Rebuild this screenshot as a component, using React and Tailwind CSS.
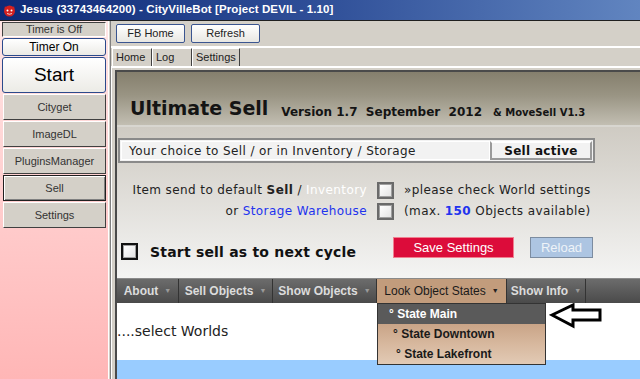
import React from "react";

const tahoma = { fontFamily: '"Liberation Sans", Arial, sans-serif' };

function SideButton({ label, pressed }) {
  return (
    <div
      className={
        "flex h-[26px] items-center justify-center bg-[#d4d0c8] text-[11px] text-[#333] " +
        (pressed
          ? "border border-[#202020] shadow-[inset_1px_1px_0_#fff,inset_-1px_-1px_0_#808080]"
          : "border border-t-white border-l-white border-r-[#404040] border-b-[#404040]")
      }
    >
      {label}
    </div>
  );
}

function CheckBox({ dark }) {
  return (
    <div
      className={
        "flex h-[17px] w-[17px] shrink-0 items-center justify-center " +
        (dark ? "border-2 border-[#111]" : "border-2 border-[#6a6a6a]")
      }
    >
      <div className="h-full w-full border border-[#a0a0a0] bg-[linear-gradient(135deg,#ffffff,#e4e4e4)]" />
    </div>
  );
}

function MenuItem({ label, active, width, children }) {
  return (
    <div
      className={
        "relative flex h-full shrink-0 items-center justify-center gap-[6px] whitespace-nowrap border-r border-[#333] text-[12px] " +
        (active ? "bg-[#c29c7c] text-[#1a1a1a]" : "font-bold text-[#dcdcdc]") +
        " " +
        width
      }
    >
      <span>{label}</span>
      <span className={"text-[7px] " + (active ? "text-[#222]" : "text-[#9a9a9a]")}>▼</span>
      {children}
    </div>
  );
}

export default function App() {
  return (
    <div className="flex h-[379px] w-[640px] flex-col overflow-hidden bg-[#d4d0c8]" style={tahoma}>
      {/* title bar */}
      <div className="flex h-[20px] shrink-0 items-center gap-[4px] bg-[linear-gradient(to_right,#0e2a78,#2f4f98_50%,#6185c0)] pl-[3px]">
        <svg width="13" height="13" viewBox="0 0 13 13">
          <circle cx="6.5" cy="7" r="5.5" fill="#d42020" />
          <path d="M2 2 L4 5 L1.5 4.5Z M11 2 L9 5 L11.5 4.5Z" fill="#d42020" />
          <circle cx="4.5" cy="6.5" r="1" fill="#fff" />
          <circle cx="8.5" cy="6.5" r="1" fill="#fff" />
          <path d="M4 9.5 Q6.5 11 9 9.5" stroke="#fff" strokeWidth="0.8" fill="none" />
        </svg>
        <span className="text-[11.5px] font-bold tracking-[0.1px] text-white">
          Jesus (33743464200) - CityVilleBot [Project DEVIL - 1.10]
        </span>
      </div>

      <div className="flex flex-1 border-t border-[#202020]">
        {/* left panel */}
        <div className="flex w-[108px] shrink-0 flex-col gap-[1px] bg-[linear-gradient(#ffe6e6,#ffb6b6)] px-[2px] pt-[1px]">
          <div className="flex h-[15px] items-center justify-center border border-t-[#404040] border-l-[#404040] border-r-white border-b-white bg-[#d4d0c8] text-[11px] text-[#333]">
            Timer is Off
          </div>
          <div className="flex h-[18px] items-center justify-center rounded-[3px] border border-[#2b4a8c] bg-[linear-gradient(#ffffff,#ecebe6)] text-[12px] text-black">
            Timer On
          </div>
          <div className="flex h-[36px] items-center justify-center rounded-[3px] border border-[#2b4a8c] bg-[linear-gradient(#ffffff,#ecebe6)] text-[19px] text-black">
            Start
          </div>
          <div className="flex flex-col gap-[1px] pl-[1px]">
            <SideButton label="Cityget" />
            <SideButton label="ImageDL" />
            <SideButton label="PluginsManager" />
            <SideButton label="Sell" pressed />
            <SideButton label="Settings" />
          </div>
        </div>

        {/* separator */}
        <div className="w-[3px] shrink-0 border-l border-r border-l-white border-r-[#808080] bg-[#d4d0c8]" />

        {/* right panel */}
        <div className="flex min-w-0 flex-1 flex-col">
          {/* toolbar */}
          <div className="flex h-[27px] shrink-0 items-center gap-[6px] border-b-2 border-white pl-[5px]">
            <div className="flex h-[19px] w-[69px] items-center justify-center rounded-[2px] border border-[#3a5590] bg-[linear-gradient(#ffffff,#e8e7e2)] text-[11px] text-[#222]">
              FB Home
            </div>
            <div className="flex h-[19px] w-[69px] items-center justify-center rounded-[2px] border border-[#3a5590] bg-[linear-gradient(#ffffff,#e8e7e2)] text-[11px] text-[#222]">
              Refresh
            </div>
          </div>

          {/* tabs */}
          <div className="flex h-[20px] shrink-0 items-end border-b-2 border-white pl-[1px]">
            <div className="flex h-[18px] w-[40px] items-center border border-b-0 border-t-white border-l-white border-r-[#404040] pl-[3px] text-[11px] text-[#222]">
              Home
            </div>
            <div className="flex h-[18px] w-[40px] items-center border border-b-0 border-t-white border-l-white border-r-[#404040] pl-[3px] text-[11px] text-[#222]">
              Log
            </div>
            <div className="flex h-[18px] w-[48px] items-center border border-b-0 border-t-white border-l-white border-r-[#404040] pl-[3px] text-[11px] text-[#222]">
              Settings
            </div>
          </div>

          {/* content */}
          <div className="flex flex-1 border-l border-white pl-[3px] pt-[2px]">
            <div
              className="flex flex-1 flex-col border-l-2 border-t-2 border-[#4a4a4a]"
              style={{ fontFamily: '"DejaVu Sans", Verdana, sans-serif' }}
            >
              {/* header */}
              <div className="flex h-[55px] shrink-0 items-end gap-[13px] border-b-2 border-[#d8d6d0] bg-[linear-gradient(#857f6d,#9a9584_45%,#c2beb2)] pb-[7px] pl-[13px]">
                <span className="text-[19px] font-bold leading-none text-[#141414]">Ultimate Sell</span>
                <span className="text-[12px] font-bold leading-none text-[#141414]">
                  Version 1.7&nbsp; September&nbsp; 2012
                </span>
                <span className="-ml-[2px] text-[10px] font-bold leading-none text-[#141414]">
                  &amp; MoveSell V1.3
                </span>
              </div>

              {/* body */}
              <div className="flex h-[151px] shrink-0 flex-col bg-[linear-gradient(#cfcbc3,#f4f4f3)] pt-[11px]">
                <div className="ml-[1px] flex h-[25px] w-[477px] border-2 border-[#8a8a8a] bg-[#f2f2f2] p-[1px]">
                  <div className="flex flex-1 items-center border border-white pl-[7px] text-[12px] tracking-[0.4px] text-[#222]">
                    Your choice to Sell / or in Inventory / Storage
                  </div>
                  <div className="flex w-[102px] items-center justify-center border-2 border-t-white border-l-[#9a9a9a] border-r-[#9a9a9a] border-b-[#9a9a9a] text-[12px] font-bold tracking-[0.3px] text-[#111]">
                    Sell active
                  </div>
                </div>

                <div className="mt-[18px] flex items-center text-[12px] tracking-[0.4px] text-[#222]">
                  <div className="w-[250px] text-right">
                    Item send to default <b>Sell</b> / <span className="text-white">Inventory</span>
                  </div>
                  <div className="ml-[10px]">
                    <CheckBox />
                  </div>
                  <div className="ml-[10px] whitespace-nowrap">»please check World settings</div>
                </div>
                <div className="mt-[3px] flex items-center text-[12px] tracking-[0.4px] text-[#222]">
                  <div className="w-[250px] text-right">
                    or <span className="text-[#2233ee]">Storage Warehouse</span>
                  </div>
                  <div className="ml-[10px]">
                    <CheckBox />
                  </div>
                  <div className="ml-[10px] whitespace-nowrap">
                    (max. <b className="text-[#2233ee]">150</b> Objects available)
                  </div>
                </div>

                <div className="mt-[17px] flex items-start">
                  <div className="ml-[4px] mt-[6px] w-[17px]">
                    <CheckBox dark />
                  </div>
                  <div className="ml-[12px] mt-[6px] w-[243px] text-[14px] font-bold leading-[18px] tracking-[0.2px] text-[#111]">
                    Start sell as to next cycle
                  </div>
                  <div
                    className="flex h-[21px] w-[121px] items-center justify-center border border-[#f08090] bg-[#dc0c3a] text-[13px] text-white"
                    style={tahoma}
                  >
                    Save Settings
                  </div>
                  <div
                    className="ml-[16px] flex h-[21px] w-[63px] items-center justify-center border border-[#7c8ca0] bg-[#adc5e2] text-[13px] text-[#eef3f8]"
                    style={tahoma}
                  >
                    Reload
                  </div>
                </div>
              </div>

              {/* menu bar */}
              <div
                className="relative flex h-[25px] shrink-0 border-t border-[#8a8a8a] bg-[linear-gradient(#6c6c6c,#4a4a4a)]"
                style={tahoma}
              >
                <MenuItem label="About" width="w-[62px]" />
                <MenuItem label="Sell Objects" width="w-[94px]" />
                <MenuItem label="Show Objects" width="w-[104px]" />
                <MenuItem label="Look Object States" width="w-[130px]" active>
                  <div className="absolute left-0 top-[24px] z-10 w-[169px] border border-[#333] text-[12px] font-bold">
                    <div className="flex h-[20px] items-center bg-[#5a5a5a] pl-[11px] text-white">° State Main</div>
                    <div className="flex h-[20px] items-center bg-[linear-gradient(#c9a487,#d7b89e)] pl-[15px] text-[#1a1a1a]">
                      ° State Downtown
                    </div>
                    <div className="flex h-[20px] items-center bg-[linear-gradient(#d7b89e,#e2cab5)] pl-[18px] text-[#1a1a1a]">
                      ° State Lakefront
                    </div>
                  </div>
                </MenuItem>
                <MenuItem label="Show Info" width="w-[79px]" />
                <svg className="absolute left-[432px] top-[24px] z-20" width="56" height="26" viewBox="0 0 56 26">
                  <path
                    d="M3 12 L24 2 L24 7 L51 7 L51 17 L24 17 L24 23 Z"
                    fill="white"
                    stroke="black"
                    strokeWidth="3"
                  />
                </svg>
              </div>

              {/* lower area */}
              <div className="flex h-[57px] shrink-0 items-center bg-white text-[14px] text-[#222]">
                ....select Worlds
              </div>
              <div className="flex-1 bg-[#99ccff]" />
            </div>
          </div>
        </div>
      </div>
    </div>
  );
}
